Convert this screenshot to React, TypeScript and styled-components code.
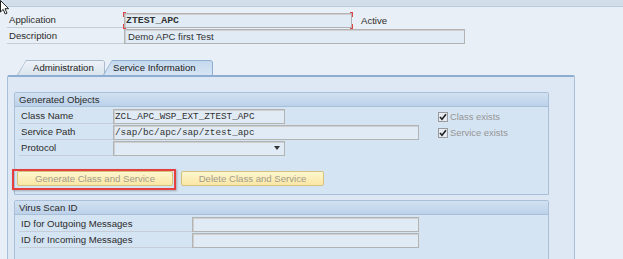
import React from 'react';
import styled, { createGlobalStyle } from 'styled-components';

const GlobalStyle = createGlobalStyle`
  html, body {
    margin: 0;
    padding: 0;
    background: #e9eff6;
  }
  body {
    font-family: Tahoma, 'Liberation Sans', Arial, sans-serif;
    font-size: 9.6px;
    color: #2b2b2b;
    overflow: hidden;
  }
`;

const Screen = styled.div`
  position: relative;
  width: 623px;
  height: 259px;
  overflow: hidden;
`;

const TopBar = styled.div`
  height: 6px;
  background: #d2dee9;
  border-bottom: 1px solid #bccbda;
`;

const Cursor = styled.svg`
  position: absolute;
  left: 0;
  top: 0;
`;

const HeaderForm = styled.div`
  display: flex;
  flex-direction: column;
  margin: 5px 0 0 7px;
`;

const Row = styled.div<{ $labelWidth: number }>`
  display: flex;
  align-items: center;
  height: 16px;
  & > :first-child {
    width: ${(p) => p.$labelWidth}px;
  }
`;

const Label = styled.div`
  box-sizing: border-box;
  height: 16px;
  line-height: 15px;
  padding-left: 2px;
  border-bottom: 1px solid #c5ced8;
  white-space: nowrap;
  flex-shrink: 0;
`;

const Field = styled.div<{ $width: number; $mono?: boolean; $bold?: boolean }>`
  box-sizing: border-box;
  width: ${(p) => p.$width}px;
  height: 15px;
  line-height: 13px;
  padding-left: ${(p) => (p.$mono ? '1px' : '3px')};
  background: #e1ebf5;
  border: 1px solid #b3b3b3;
  box-shadow: inset 1px 1px 0 #cfcfcf;
  white-space: nowrap;
  font-family: ${(p) => (p.$mono ? "'Liberation Mono', 'Courier New', monospace" : 'inherit')};
  font-size: ${(p) => (p.$mono ? (p.$bold ? '9.8px' : '9.3px') : '9.6px')};
  font-weight: ${(p) => (p.$bold ? 700 : 400)};
  color: #333;
  position: relative;
`;

/* red required-field corner ticks */
const Corner = styled.span<{ $x: 'left' | 'right'; $y: 'top' | 'bottom' }>`
  position: absolute;
  ${(p) => p.$x}: -2px;
  ${(p) => p.$y}: -2px;
  width: 2px;
  height: 4px;
  border-${(p) => p.$x}: 1px solid #e04545;
  border-${(p) => p.$y}: 1px solid #e04545;
`;

const Status = styled.span`
  margin-left: 9px;
`;

const TabStrip = styled.div`
  display: flex;
  margin: 16px 0 0 17px;
  height: 15px;
`;

const Tab = styled.div<{ $active?: boolean; $width: number }>`
  position: relative;
  box-sizing: border-box;
  width: ${(p) => p.$width}px;
  height: 15px;
  line-height: 16px;
  padding-left: ${(p) => (p.$active ? '10px' : '16px')};
  margin-left: ${(p) => (p.$active ? '-2px' : '0')};
  color: #222;
  z-index: ${(p) => (p.$active ? 2 : 1)};
  background: ${(p) => (p.$active ? '#8eafd1' : '#a9bccf')};
  clip-path: polygon(0 100%, 9px 0, calc(100% - 2px) 0, 100% 2px, 100% 100%);
  &::before {
    content: '';
    position: absolute;
    inset: 1px 1px 0 1px;
    background: ${(p) =>
      p.$active
        ? 'linear-gradient(#c4d8ee, #d7e5f4)'
        : 'linear-gradient(#edf2f7, #dbe4ee)'};
    clip-path: polygon(0 100%, 8px 0, calc(100% - 1px) 0, 100% 1px, 100% 100%);
    z-index: -1;
  }
`;

const Panel = styled.div`
  box-sizing: border-box;
  width: 568px;
  height: 200px;
  margin-left: 7px;
  background: #dde8f4;
  border: 1px solid #a9c0d8;
  border-top: 2px solid #8daed0;
  border-radius: 2px 2px 0 0;
  padding: 15px 0 0 6px;
  display: flex;
  flex-direction: column;
  gap: 5px;
`;

const Group = styled.div`
  box-sizing: border-box;
  width: 535px;
  border: 1px solid #a7bfd7;
  border-radius: 2px 2px 0 0;
  background: #d5e4f3;
`;

const GroupHeader = styled.div`
  height: 13px;
  line-height: 13px;
  padding-left: 4px;
  background: linear-gradient(#d2e1f1, #bcd1e9);
  border-bottom: 1px solid #a7bfd7;
`;

const GroupBody = styled.div<{ $height: number }>`
  position: relative;
  height: ${(p) => p.$height}px;
  padding: 1px 0 0 4px;
`;

const GroupRow = styled.div<{ $labelWidth: number }>`
  display: flex;
  align-items: center;
  height: 16px;
  & > :first-child {
    width: ${(p) => p.$labelWidth}px;
  }
`;

const Select = styled(Field)`
  &::after {
    content: '';
    position: absolute;
    right: 4px;
    top: 4px;
    border-left: 3px solid transparent;
    border-right: 3px solid transparent;
    border-top: 4px solid #333;
  }
`;

const Checks = styled.div`
  position: absolute;
  left: 423px;
  top: 4px;
  display: flex;
  flex-direction: column;
  gap: 5px;
`;

const Check = styled.div`
  display: flex;
  align-items: center;
  gap: 2px;
  color: #959595;
  font-size: 9.4px;
  height: 11px;
`;

const Box = styled.span`
  box-sizing: border-box;
  width: 10px;
  height: 10px;
  border: 1px solid #9a9a9a;
  background: #e4ebf2;
  display: inline-flex;
  align-items: center;
  justify-content: center;
`;

const ButtonRow = styled.div`
  display: flex;
  align-items: center;
  gap: 5px;
  margin: 13px 0 0 -1px;
`;

const Highlight = styled.div`
  padding: 0 1px 2px 3px;
  border: 2px solid #e5403e;
  box-shadow: 1px 1px 2px rgba(0, 0, 0, 0.25);
  margin-left: -6px;
`;

const Button = styled.div<{ $width: number }>`
  box-sizing: border-box;
  width: ${(p) => p.$width}px;
  height: 15px;
  line-height: 14px;
  text-align: center;
  color: #a29d8c;
  background: linear-gradient(#fef6cf, #fbe7a4);
  border: 1px solid #d5c27c;
  border-radius: 2px;
`;

const Cell = styled.div`
  margin-top: -3px;
`;

const App: React.FC = () => {
  return (
    <Screen>
      <GlobalStyle />
      <TopBar />
      <Cursor width="10" height="16" viewBox="0 0 10 16">
        <path d="M0.5 0.5 L0.5 12 L3.2 9.4 L5.2 14 L7 13.2 L5 8.7 L8.6 8.7 Z" fill="#fff" stroke="#222" strokeWidth="1" />
      </Cursor>

      <HeaderForm>
        <Row $labelWidth={117}>
          <Label>Application</Label>
          <Field $width={228} $mono $bold>
            <Corner $x="left" $y="top" />
            <Corner $x="left" $y="bottom" />
            ZTEST_APC
            <Corner $x="right" $y="top" />
            <Corner $x="right" $y="bottom" />
          </Field>
          <Status>Active</Status>
        </Row>
        <Row $labelWidth={117}>
          <Label>Description</Label>
          <Field $width={341}>Demo APC first Test</Field>
        </Row>
      </HeaderForm>

      <TabStrip>
        <Tab $width={88}>Administration</Tab>
        <Tab $width={110} $active>Service Information</Tab>
      </TabStrip>

      <Panel>
        <Group>
          <GroupHeader>Generated Objects</GroupHeader>
          <GroupBody $height={86}>
            <GroupRow $labelWidth={94}>
              <Label>Class Name</Label>
              <Field $width={172} $mono>ZCL_APC_WSP_EXT_ZTEST_APC</Field>
            </GroupRow>
            <GroupRow $labelWidth={94}>
              <Label>Service Path</Label>
              <Field $width={306} $mono>/sap/bc/apc/sap/ztest_apc</Field>
            </GroupRow>
            <GroupRow $labelWidth={94}>
              <Label>Protocol</Label>
              <Select $width={172} />
            </GroupRow>
            <Checks>
              {['Class exists', 'Service exists'].map((t) => (
                <Check key={t}>
                  <Box>
                    <svg width="8" height="8" viewBox="0 0 8 8">
                      <path d="M1 4 L3 6.3 L7 1.3" fill="none" stroke="#222" strokeWidth="1.6" />
                    </svg>
                  </Box>
                  {t}
                </Check>
              ))}
            </Checks>
            <ButtonRow>
              <Highlight>
                <Button $width={156}>Generate Class and Service</Button>
              </Highlight>
              <Cell>
                <Button $width={143}>Delete Class and Service</Button>
              </Cell>
            </ButtonRow>
          </GroupBody>
        </Group>

        <Group>
          <GroupHeader>Virus Scan ID</GroupHeader>
          <GroupBody $height={60}>
            <GroupRow $labelWidth={173}>
              <Label>ID for Outgoing Messages</Label>
              <Field $width={227} />
            </GroupRow>
            <GroupRow $labelWidth={173}>
              <Label>ID for Incoming Messages</Label>
              <Field $width={227} />
            </GroupRow>
          </GroupBody>
        </Group>
      </Panel>
    </Screen>
  );
};

export default App;
